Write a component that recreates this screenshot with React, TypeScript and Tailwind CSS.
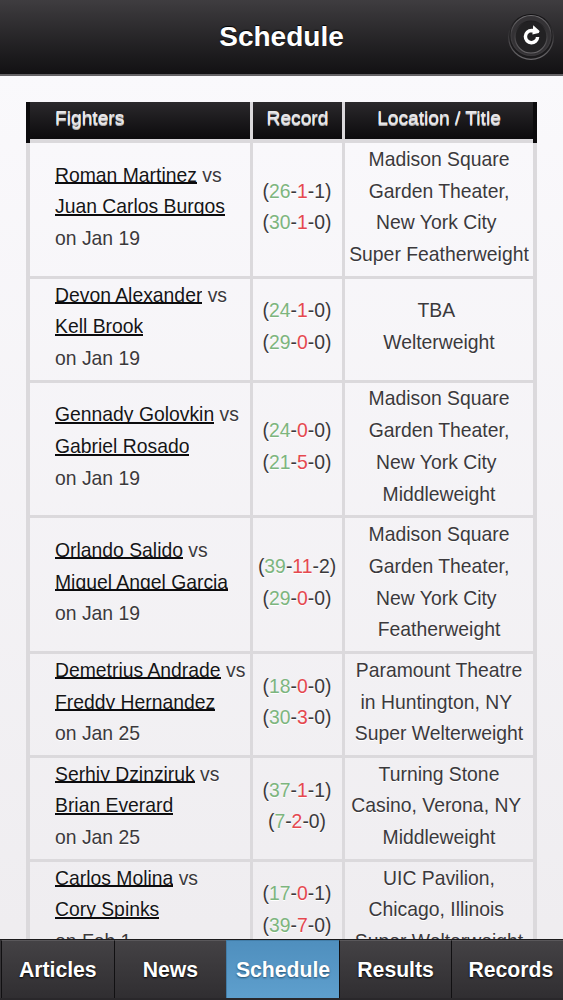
import { clsx } from 'clsx';

interface Fight {
  fighters: [string, string];
  date: string;
  records: [string, string, string][];
  location: string[];
}

const fights: Fight[] = [
  {
    fighters: ['Roman Martinez', 'Juan Carlos Burgos'],
    date: 'Jan 19',
    records: [['26', '1', '1'], ['30', '1', '0']],
    location: ['Madison Square', 'Garden Theater,', 'New York City\u00a0', 'Super Featherweight'],
  },
  {
    fighters: ['Devon Alexander', 'Kell Brook'],
    date: 'Jan 19',
    records: [['24', '1', '0'], ['29', '0', '0']],
    location: ['TBA\u00a0', 'Welterweight'],
  },
  {
    fighters: ['Gennady Golovkin', 'Gabriel Rosado'],
    date: 'Jan 19',
    records: [['24', '0', '0'], ['21', '5', '0']],
    location: ['Madison Square', 'Garden Theater,', 'New York City\u00a0', 'Middleweight'],
  },
  {
    fighters: ['Orlando Salido', 'Miguel Angel Garcia'],
    date: 'Jan 19',
    records: [['39', '11', '2'], ['29', '0', '0']],
    location: ['Madison Square', 'Garden Theater,', 'New York City\u00a0', 'Featherweight'],
  },
  {
    fighters: ['Demetrius Andrade', 'Freddy Hernandez'],
    date: 'Jan 25',
    records: [['18', '0', '0'], ['30', '3', '0']],
    location: ['Paramount Theatre', 'in Huntington, NY\u00a0', 'Super Welterweight'],
  },
  {
    fighters: ['Serhiy Dzinziruk', 'Brian Everard'],
    date: 'Jan 25',
    records: [['37', '1', '1'], ['7', '2', '0']],
    location: ['Turning Stone', 'Casino, Verona, NY\u00a0', 'Middleweight'],
  },
  {
    fighters: ['Carlos Molina', 'Cory Spinks'],
    date: 'Feb 1',
    records: [['17', '0', '1'], ['39', '7', '0']],
    location: ['UIC Pavilion,', 'Chicago, Illinois\u00a0', 'Super Welterweight'],
  },
];

const tabs = ['Articles', 'News', 'Schedule', 'Results', 'Records'];

function RefreshButton() {
  return (
    <button aria-label="Refresh" className="h-12 w-12 shrink-0">
      <svg viewBox="0 0 48 48" className="h-12 w-12">
        <defs>
          <linearGradient id="rim" x1="0" y1="0" x2="0" y2="1">
            <stop offset="0" stopColor="#111012" />
            <stop offset="1" stopColor="#6a686b" />
          </linearGradient>
          <linearGradient id="ring" x1="0" y1="0" x2="0" y2="1">
            <stop offset="0" stopColor="#706e71" />
            <stop offset="0.5" stopColor="#3f3d40" />
            <stop offset="1" stopColor="#3a383b" />
          </linearGradient>
          <linearGradient id="inner" x1="0" y1="0" x2="0" y2="1">
            <stop offset="0" stopColor="#1c1b1d" />
            <stop offset="1" stopColor="#6a686b" />
          </linearGradient>
        </defs>
        <circle cx="24" cy="24" r="22.3" fill="#1b1a1c" stroke="url(#rim)" strokeWidth="1.2" />
        <circle cx="24" cy="22.5" r="20" fill="#343235" stroke="url(#ring)" strokeWidth="1.2" />
        <circle cx="24" cy="24" r="16" fill="#222123" stroke="url(#inner)" strokeWidth="1.2" />
        <path d="M 27.5 17.9 L 24.6 17.5 A 6.1 6.1 0 1 0 30.6 24" fill="none" stroke="#fff" strokeWidth="3.5" />
        <path d="M 26.2 12.2 L 32.6 18 L 31.8 20 L 25.4 21.4 Z" fill="#fff" />
      </svg>
    </button>
  );
}

function FighterLink({ name }: { name: string }) {
  // Clips descenders at the underline
  return (
    <a className="inline-block h-[24.5px] overflow-hidden border-b-2 border-[#0b0b0d] align-top text-[#151517]">
      {name}
    </a>
  );
}

function FightRow({ fight }: { fight: Fight }) {
  return (
    <div
      className={clsx(
        'grid grid-cols-[220px_89px_188px] gap-x-[3px] text-center',
        fight.location.length === 4 ? 'h-[135.7px]' : 'h-[103.9px]',
      )}
    >
      <div className="flex flex-col justify-center border-b-[3px] border-[#dbd9dc] pb-[4px] pl-[25px] text-left whitespace-nowrap">
        <div className="h-[31.75px]"><FighterLink name={fight.fighters[0]} /> vs</div>
        <div className="h-[31.75px]"><FighterLink name={fight.fighters[1]} /></div>
        <div className="h-[31.75px]">on {fight.date}</div>
      </div>
      <div className="flex flex-col justify-center border-b-[3px] border-[#dbd9dc] pr-px pb-[4px] whitespace-nowrap">
        {fight.records.map(([wins, losses, draws], i) => (
          <div key={i}>
            (<span className="text-[#7db57e]">{wins}</span>-<span className="text-[#e5484f]">{losses}</span>-{draws})
          </div>
        ))}
      </div>
      <div className="flex flex-col justify-center border-b-[3px] border-[#dbd9dc] pb-[4px] whitespace-nowrap">
        {fight.location.map((line) => (
          <div key={line}>{line}</div>
        ))}
      </div>
    </div>
  );
}

export default function App() {
  return (
    <div className="flex h-[1000px] w-[563px] flex-col overflow-hidden bg-linear-to-b from-[#fbfafd] to-[#eeecef] font-['Liberation_Sans',Arial,sans-serif]">
      <header className="flex h-[76px] shrink-0 items-center border-b-2 border-[#656366] bg-linear-to-b from-[#3f3d40] to-[#121113] pr-2 pl-14">
        <h1 className="flex-1 text-center text-[28px] font-bold text-white [text-shadow:0_-1px_1px_#000]">Schedule</h1>
        <RefreshButton />
      </header>

      <main className="min-h-0 flex-1 overflow-hidden px-[26px] pt-[26px]">
        <div className="w-[511px]">
          <div className="flex h-[41px] bg-[#0c0b0d] px-1 text-center text-[19.2px] leading-[32px] text-[#e9e8ea] [text-shadow:0_1px_0_#dddcde,0_2px_0_#a9a8aa]">
            <div className="grid grid-cols-[220px_89px_188px] gap-x-[3px] bg-[#dbd9dc] pb-1">
              <div className="bg-linear-to-b from-[#2b292c] to-[#0c0b0d] pl-[25px] text-left">Fighters</div>
              <div className="bg-linear-to-b from-[#2b292c] to-[#0c0b0d]">Record</div>
              <div className="bg-linear-to-b from-[#2b292c] to-[#0c0b0d]">Location / Title</div>
            </div>
          </div>
          <div className="border-x-4 border-[#dbd9dc] bg-[linear-gradient(to_right,transparent_220px,#dbd9dc_220px,#dbd9dc_223px,transparent_223px,transparent_312px,#dbd9dc_312px,#dbd9dc_315px,transparent_315px)] text-[19.35px] leading-[31.75px] text-[#3b393c] [text-shadow:0_1px_0_#fff]">
            {fights.map((fight) => (
              <FightRow key={fight.fighters[0]} fight={fight} />
            ))}
          </div>
        </div>
      </main>

      <nav className="flex h-[61px] shrink-0 border-t border-b-2 border-t-[#1b1a1c] border-b-[#29272a] bg-[#353336] pl-px">
        {tabs.map((tab) => (
          <button
            key={tab}
            className={clsx(
              'shrink-0 border-t border-l text-center text-[21.2px] font-bold text-white',
              tab === 'Records' ? 'w-[118px]' : 'w-[112.6px]',
              tab === 'Schedule'
                ? 'border-t-[#427da8] border-l-[#427da8] bg-linear-to-b from-[#4f8fbe] to-[#5e9fcd] [text-shadow:0_1px_2px_#24506f]'
                : 'border-t-[#5a585b] border-l-[#111012] bg-linear-to-b from-[#444245] to-[#302e31] [text-shadow:0_1px_2px_#000]',
            )}
          >
            {tab}
          </button>
        ))}
      </nav>
    </div>
  );
}
